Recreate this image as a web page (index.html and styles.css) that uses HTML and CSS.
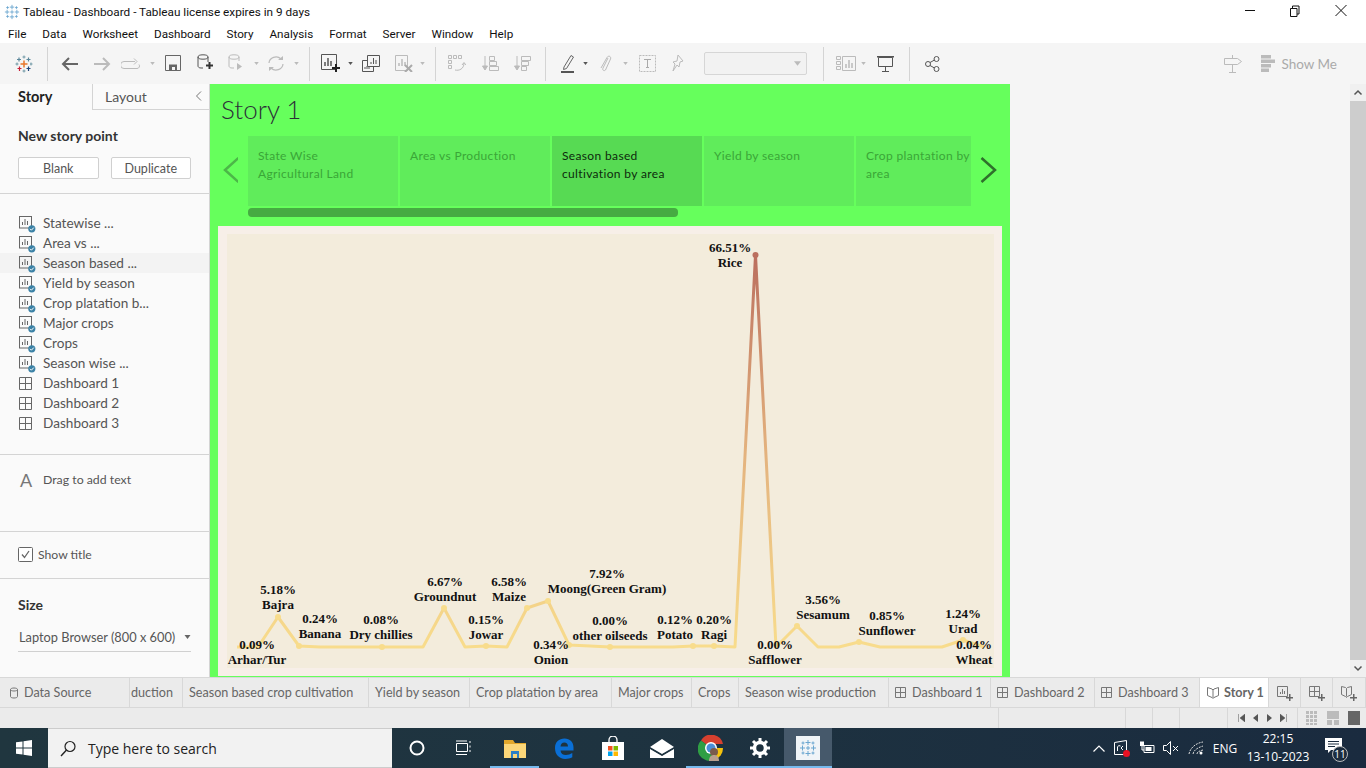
FILE: index.html
```html
<!DOCTYPE html>
<html lang="en">
<head>
<meta charset="utf-8">
<title>Tableau - Dashboard</title>
<link rel="stylesheet" href="styles.css">
</head>
<body>

<svg class="defs" width="0" height="0">
  <symbol id="sheet" viewBox="0 0 18 18">
    <rect x="0.5" y="0.5" width="12" height="11.5" fill="none" stroke="#666"/>
    <path d="M3.5 9V6M6 9V3M8.5 9V5" stroke="#666" fill="none"/>
    <circle cx="12.8" cy="12.8" r="3.6" fill="#3b82a6"/>
    <path d="M11 12.8l1.4 1.4 2.4-2.6" stroke="#fff" fill="none"/>
  </symbol>
  <symbol id="dash" viewBox="0 0 14 14">
    <path d="M.5 .5h12v12H.5zM.5 6.5h12M6.5 .5v12" stroke="#666" fill="none"/>
  </symbol>
  <symbol id="dashGrey" viewBox="0 0 12 12">
    <path d="M.5 .5h10v10H.5zM.5 5.5h10M5.5 .5v10" stroke="#777" fill="none"/>
  </symbol>
  <symbol id="book" viewBox="0 0 12 14">
    <path d="M.5 1.500l4.500 1.500 1 1 1-1 4.500-1.500v8l-4.500 2-1 1-1-1-4.500-2zM6 4v8" stroke="#777" fill="none"/>
  </symbol>
  <symbol id="wheel" viewBox="0 0 18 18">
    <path d="M9 1v5M6.500 3.500h5M9 12v5M6.500 14.500h5M1 9h5M3.500 6.500v5M12 9h5M14.500 6.500v5M7 9h4M9 7v4M4 2.500v3M2.500 4h3M14 2.500v3M12.500 4h3M4 12.500v3M2.500 14h3M14 12.500v3M12.500 14h3" stroke="#6aa6d0" fill="none"/>
  </symbol>
  <symbol id="caret" viewBox="0 0 6 4">
    <path d="M0 0h6L3 4z"/>
  </symbol>
</svg>

<header class="title-bar">
  <svg class="title-icon" width="16" height="16"><use href="#wheel"/></svg>
  <span class="title-text">Tableau - Dashboard - Tableau license expires in 9 days</span>
  <div class="win-buttons">
    <svg width="46" height="24"><path d="M17 10.500h10" stroke="#111"/></svg>
    <svg width="46" height="24"><path d="M16.500 8.500h6.500v8h-6.500zM18.500 8.500v-2.500h6.500v8h-2" stroke="#111" fill="none"/></svg>
    <svg width="46" height="24"><path d="M15.500 5l11 11M26.500 5l-11 11" stroke="#111" fill="none"/></svg>
  </div>
</header>

<nav class="menu-bar">
  <span>File</span><span>Data</span><span>Worksheet</span><span>Dashboard</span><span>Story</span>
  <span>Analysis</span><span>Format</span><span>Server</span><span>Window</span><span>Help</span>
</nav>

<div class="toolbar">
  <svg width="18" height="18" viewBox="0 0 18 18">
    <path d="M9 5.500v7M5.500 9h7" stroke="#e8762b" stroke-width="1.500"/>
    <path d="M9 .5v3M7.500 2h3M9 14.500v3M7.500 16h3M2 7.500v3M.5 9h3M15 9h2.500M16 7.500v3" stroke="#7099a6"/>
    <path d="M13.500 2.500v4M11.500 4.500h4M4 2.500v4M2 4.500h4" stroke="#5b879b" stroke-width="1.200"/>
    <path d="M4.500 11.500v4.500M2.500 13.500h4" stroke="#c72037" stroke-width="1.200"/>
    <path d="M13.500 11.500v4.500M11.500 13.500h4" stroke="#1f447a" stroke-width="1.200"/>
  </svg>
  <i class="sep"></i>
  <svg width="18" height="16"><path d="M8 2L2 8l6 6M2 8h15" fill="none" stroke="#666" stroke-width="2"/></svg>
  <svg width="18" height="16"><path d="M10 2l6 6-6 6M1 8h15" fill="none" stroke="#bbb" stroke-width="2"/></svg>
  <svg width="20" height="12"><path d="M14 3.500H3a2.500 2.500 0 0 0 0 7h13a2.500 2.500 0 0 0 2-4M13 .5l3 3-3 3" fill="none" stroke="#bbb"/></svg>
  <svg class="caret" width="5" height="3"><use href="#caret"/></svg>
  <svg width="17" height="17"><path d="M.5 .5h15v15H.5z" fill="none" stroke="#666"/><path d="M4 9.500h8V16H4z" fill="#666"/><path d="M7 12h3v3H7z" fill="#f5f5f5"/></svg>
  <svg width="16" height="19"><path d="M1 3v9c0 1 1 2 3 2h2M11 3v5" fill="none" stroke="#555"/><ellipse cx="6" cy="3" rx="5" ry="2.200" fill="none" stroke="#555"/><path d="M9 10.500h2.500V8h2v2.500H16v2h-2.500V15h-2v-2.500H9z" fill="#333"/></svg>
  <svg width="16" height="19"><path d="M1 3v9c0 1 1 2 3 2h2M11 3v4" fill="none" stroke="#bbb"/><ellipse cx="6" cy="3" rx="5" ry="2.200" fill="none" stroke="#bbb"/><path d="M9 9l5 3.500-5 3.500z" fill="#bbb"/></svg>
  <svg class="caret" width="5" height="3"><use href="#caret"/></svg>
  <svg width="18" height="17"><path d="M2 8a7 6.500 0 0 1 12-4M16 9a7 6.500 0 0 1-12 4" fill="none" stroke="#bbb" stroke-width="1.200"/><path d="M11 5h5V1zM7 12H2v4z" fill="#bbb"/></svg>
  <svg class="caret" width="5" height="3"><use href="#caret"/></svg>
  <i></i>
  <i class="sep"></i>
  <i></i>
  <svg width="19" height="19"><path d="M.5 .5h15v15H.5z" fill="none" stroke="#555"/><path d="M4 12V8M7 12V4M10 12V7" stroke="#555" stroke-width="1.500"/><path d="M11 13h3v-3h2v3h3v2h-3v3h-2v-3h-3z" fill="#222"/></svg>
  <svg class="caret dark" width="5" height="3"><use href="#caret"/></svg>
  <svg width="18" height="17"><path d="M.5 5.500h11v11H.5z" fill="#f5f5f5" stroke="#555"/><path d="M3 14v-2M5 14v-3M7 14v-2" stroke="#555"/><path d="M5.500 .5h12v11h-12z" fill="#f5f5f5" stroke="#555"/><path d="M9 9V7M11.500 9V3M14 9V5" stroke="#555"/></svg>
  <svg width="19" height="17"><path d="M.5 .5h12v15H.5z" fill="none" stroke="#bbb"/><path d="M4 11V8M7 11V4M10 11V7" stroke="#bbb" stroke-width="1.500"/><path d="M10 10l7 7M17 10l-7 7" stroke="#aaa" stroke-width="2"/></svg>
  <svg class="caret" width="5" height="3"><use href="#caret"/></svg>
  <i></i>
  <i class="sep"></i>
  <i></i>
  <svg width="18" height="17"><path d="M.5 .5h3v3h-3zM5.500 .5h3v3h-3zM10.500 .5h3v3h-3zM.5 5.500h3v3h-3zM.5 10.500h3v3h-3z" fill="none" stroke="#bbb"/><path d="M7 15c4 1 9-1 9-7M14 10l2-2.500 2 2.500" fill="none" stroke="#bbb"/></svg>
  <svg width="18" height="17"><path d="M4 1v12M1.500 11L4 15l2.500-4z" fill="#bbb" stroke="#bbb"/><path d="M8.500 1.500h5v4h-5zM8.500 6.500h7v4h-7zM8.500 11.500h9v4h-9z" fill="none" stroke="#bbb"/></svg>
  <svg width="18" height="17"><path d="M4 1v12M1.500 11L4 15l2.500-4z" fill="#bbb" stroke="#bbb"/><path d="M8.500 1.500h9v4h-9zM8.500 6.500h7v4h-7zM8.500 11.500h5v4h-5z" fill="none" stroke="#bbb"/></svg>
  <i></i>
  <i class="sep"></i>
  <i></i>
  <svg width="14" height="19"><path d="M3 13L10 1.500l2.500 1.500-7 11.500-3 1z" fill="none" stroke="#666"/><path d="M0 17h13v2H0z" fill="#555"/></svg>
  <svg class="caret dark" width="5" height="3"><use href="#caret"/></svg>
  <svg width="13" height="19"><path d="M9 4L4 14c-1 2 1 3.500 2.500 2L11.500 5c1-2.500-2-4-3.500-1.500L2 14" fill="none" stroke="#bbb"/></svg>
  <svg class="caret" width="5" height="3"><use href="#caret"/></svg>
  <svg width="17" height="17"><path d="M.5 .5h16v16H.5z" fill="none" stroke="#bbb" stroke-dasharray="2 1"/><path d="M5 4.500h7M8.500 4.500v8M7 12.500h3" fill="none" stroke="#aaa"/></svg>
  <svg width="13" height="19"><path d="M7 1l5 6-3 1-1 5-2-2-4 6 2-7-2-2 4-1z" fill="none" stroke="#bbb"/></svg>
  <i></i>
  <div class="tb-select"><svg class="caret" width="7" height="5"><use href="#caret"/></svg></div>
  <i></i>
  <i class="sep"></i>
  <i></i>
  <svg width="20" height="15"><path d="M.5 .5h4v3h-4zM.5 5.500h4v3h-4zM.5 10.500h4v3h-4zM6.500 .5h13v14h-13z" fill="none" stroke="#bbb"/><path d="M10 12V8M13 12V4M16 12V7" stroke="#bbb" stroke-width="1.500"/></svg>
  <svg class="caret" width="5" height="3"><use href="#caret"/></svg>
  <svg width="17" height="16"><path d="M0 .5h17" stroke="#555" stroke-width="2"/><path d="M1.500 1.500h14v9h-14zM8.500 10.500v5M5 15.500h7" fill="none" stroke="#555"/></svg>
  <i></i>
  <i class="sep"></i>
  <svg width="15" height="16"><circle cx="3" cy="8" r="2.500" fill="none" stroke="#555"/><circle cx="11.500" cy="3" r="2.500" fill="none" stroke="#555"/><circle cx="11.500" cy="13" r="2.500" fill="none" stroke="#555"/><path d="M5 6.500l4.500-2.500M5 9.500l4.500 2.500" stroke="#555"/></svg>
  <div class="tb-right">
    <svg width="18" height="18"><path d="M8.500 0v3M8.500 10v8M5 17.500h7M.5 3.500h13l4 3-4 3H.5z" fill="none" stroke="#bbb"/></svg>
    <svg class="show-icon" width="14" height="17"><path d="M0 0h10v3.500H0zM0 4.500h14V8H0zM0 9h10v3.500H0zM0 13.500h8V17H0z" fill="#bbb"/></svg>
    <span class="show-me">Show Me</span>
  </div>
</div>

<main class="workspace">
  <aside class="side">
    <div class="side-tabs">
      <div class="side-tab active">Story</div>
      <div class="side-tab">Layout
        <svg class="collapse" width="7" height="10"><path d="M6 .5L1.500 5 6 9.500" fill="none" stroke="#777"/></svg>
      </div>
    </div>
    <section class="new-point">
      <h3>New story point</h3>
      <div class="btn-row">
        <button class="btn">Blank</button>
        <button class="btn">Duplicate</button>
      </div>
    </section>
    <ul class="sheet-list">
      <li><svg width="18" height="18"><use href="#sheet"/></svg>Statewise ...</li>
      <li><svg width="18" height="18"><use href="#sheet"/></svg>Area vs ...</li>
      <li class="current"><svg width="18" height="18"><use href="#sheet"/></svg>Season based ...</li>
      <li><svg width="18" height="18"><use href="#sheet"/></svg>Yield by season</li>
      <li><svg width="18" height="18"><use href="#sheet"/></svg>Crop platation b...</li>
      <li><svg width="18" height="18"><use href="#sheet"/></svg>Major crops</li>
      <li><svg width="18" height="18"><use href="#sheet"/></svg>Crops</li>
      <li><svg width="18" height="18"><use href="#sheet"/></svg>Season wise ...</li>
      <li class="board"><svg width="18" height="14"><use href="#dash" width="14" height="14"/></svg>Dashboard 1</li>
      <li class="board"><svg width="18" height="14"><use href="#dash" width="14" height="14"/></svg>Dashboard 2</li>
      <li class="board"><svg width="18" height="14"><use href="#dash" width="14" height="14"/></svg>Dashboard 3</li>
    </ul>
    <div class="drag-text"><span class="big-a">A</span>Drag to add text</div>
    <label class="show-title">
      <svg width="15" height="15"><rect x=".5" y=".5" width="14" height="14" rx="1" fill="#fff" stroke="#666"/><path d="M4 7.500l2.500 3 4.500-6.500" fill="none" stroke="#666" stroke-width="1.300"/></svg>
      Show title
    </label>
    <section class="size-box">
      <h3>Size</h3>
      <div class="size-select">Laptop Browser (800 x 600)<svg class="dark-caret" width="7" height="4"><use href="#caret"/></svg></div>
    </section>
  </aside>

  <section class="story">
    <h1 class="story-title">Story 1</h1>
    <div class="story-nav">
      <svg class="arrow" width="17" height="26"><path d="M15.500 1L2 13l13.500 12" fill="none" stroke="#4cb748" stroke-width="2.500"/></svg>
      <div class="points">
        <div class="cards">
          <div class="card">State Wise<br>Agricultural Land</div>
          <div class="card">Area vs Production</div>
          <div class="card on">Season based<br>cultivation by area</div>
          <div class="card">Yield by season</div>
          <div class="card">Crop plantation by<br>area</div>
        </div>
        <div class="points-scroll"><div class="points-thumb"></div></div>
      </div>
      <svg class="arrow" width="17" height="26"><path d="M1.500 1L15 13 1.500 25" fill="none" stroke="#2f702c" stroke-width="2.500"/></svg>
    </div>
    <div class="sheet-frame">
      <svg class="chart" viewBox="227 234 767 434" width="767" height="434">
        <defs>
          <linearGradient id="lineFade" gradientUnits="userSpaceOnUse" x1="0" y1="255" x2="0" y2="647">
            <stop offset="0" stop-color="#bb6f5e"/>
            <stop offset="0.5" stop-color="#e3b27e"/>
            <stop offset="1" stop-color="#f8dc8c"/>
          </linearGradient>
        </defs>
        <path class="crop-line" d="M237 647L258 647 278 617 299 646 320 647 341 647 361 647 382 647 403 647 423 647 444 608 465 647 486 646 507 647 527 608 548 601 569 645 590 646 610 647 631 647 652 647 673 647 693 646 714 646 735 647 755.500 255 776 647 797 626 818 647 839 647 859 642 880 647 901 647 921 647 942 647 963 640 984 647"/>
        <g class="crop-dots">
          <circle cx="278" cy="617" r="3"/><circle cx="299" cy="646" r="3"/><circle cx="382" cy="647" r="3"/>
          <circle cx="444" cy="608" r="3"/><circle cx="486" cy="646" r="3"/><circle cx="527" cy="608" r="3"/>
          <circle cx="548" cy="601" r="3"/><circle cx="569" cy="645" r="3"/><circle cx="610" cy="647" r="3"/>
          <circle cx="693" cy="646" r="3"/><circle cx="714" cy="646" r="3"/><circle cx="797" cy="626" r="3"/>
          <circle cx="859" cy="642" r="3"/><circle cx="963" cy="640" r="3"/>
          <circle cx="755.500" cy="255" r="3" fill="#bb6f5e"/>
        </g>
        <g class="crop-labels">
          <text x="730" y="252">66.51%</text><text x="730" y="267">Rice</text>
          <text x="257" y="649">0.09%</text><text x="257" y="664">Arhar/Tur</text>
          <text x="278" y="594">5.18%</text><text x="278" y="609">Bajra</text>
          <text x="320" y="623">0.24%</text><text x="320" y="638">Banana</text>
          <text x="381" y="624">0.08%</text><text x="381" y="639">Dry chillies</text>
          <text x="445" y="586">6.67%</text><text x="445" y="601">Groundnut</text>
          <text x="486" y="624">0.15%</text><text x="486" y="639">Jowar</text>
          <text x="509" y="586">6.58%</text><text x="509" y="601">Maize</text>
          <text x="607" y="578">7.92%</text><text x="607" y="593">Moong(Green Gram)</text>
          <text x="551" y="649">0.34%</text><text x="551" y="664">Onion</text>
          <text x="610" y="625">0.00%</text><text x="610" y="640">other oilseeds</text>
          <text x="675" y="624">0.12%</text><text x="675" y="639">Potato</text>
          <text x="714" y="624">0.20%</text><text x="714" y="639">Ragi</text>
          <text x="775" y="649">0.00%</text><text x="775" y="664">Safflower</text>
          <text x="823" y="604">3.56%</text><text x="823" y="619">Sesamum</text>
          <text x="887" y="620">0.85%</text><text x="887" y="635">Sunflower</text>
          <text x="963" y="618">1.24%</text><text x="963" y="633">Urad</text>
          <text x="974" y="649">0.04%</text><text x="974" y="664">Wheat</text>
        </g>
      </svg>
    </div>
  </section>

  <div class="blank-area"></div>

  <div class="v-scroll">
    <svg width="16" height="17"><path d="M4.500 10.500L8 7l3.500 3.500" fill="none" stroke="#555" stroke-width="1.500"/></svg>
    <div class="v-thumb"></div>
    <svg width="16" height="17"><path d="M4.500 6.500L8 10l3.500-3.500" fill="none" stroke="#555" stroke-width="1.500"/></svg>
  </div>
</main>

<div class="tabs">
  <div class="tab source"><svg width="8" height="12"><path d="M.5 2.500v7c0 2 7 2 7 0v-7c0-2-7-2-7 0zM.5 2.500c0 2 7 2 7 0" fill="none" stroke="#777"/></svg>Data Source</div>
  <div class="tab clipped">duction</div>
  <div class="tab">Season based crop cultivation</div>
  <div class="tab">Yield by season</div>
  <div class="tab">Crop platation by area</div>
  <div class="tab">Major crops</div>
  <div class="tab">Crops</div>
  <div class="tab">Season wise production</div>
  <div class="tab"><svg width="12" height="12"><use href="#dashGrey"/></svg>Dashboard 1</div>
  <div class="tab"><svg width="12" height="12"><use href="#dashGrey"/></svg>Dashboard 2</div>
  <div class="tab"><svg width="12" height="12"><use href="#dashGrey"/></svg>Dashboard 3</div>
  <div class="tab open"><svg width="12" height="14"><use href="#book"/></svg>Story 1</div>
  <div class="tab add"><svg width="16" height="16"><path d="M.5 1.500h10v10H.5z" fill="none" stroke="#777"/><path d="M3.500 9V7M5.500 9V4M7.500 9V6" stroke="#777"/><path d="M9 12h3V9h1.500v3H16v1.500h-2.500V16H12v-2.500H9z" fill="#666"/></svg></div>
  <div class="tab add"><svg width="16" height="16"><path d="M.5 1.500h10v10H.5zM.5 6.500h10M5.500 1.500v10" fill="none" stroke="#777"/><path d="M9 12h3V9h1.500v3H16v1.500h-2.500V16H12v-2.500H9z" fill="#666"/></svg></div>
  <div class="tab add"><svg width="16" height="16"><path d="M.5 1.500l4 1 1 1 1-1 4-1v8l-4 2-1 1-1-1-4-2zM5.500 3.500v8" fill="none" stroke="#777"/><path d="M9 12h3V9h1.500v3H16v1.500h-2.500V16H12v-2.500H9z" fill="#666"/></svg></div>
</div>

<div class="status">
  <div></div><div></div><div></div><div></div><div></div>
  <div class="pager">
    <svg width="7" height="8"><path d="M.5 0v8M7 0v8L2 4z" fill="#555" stroke="#555" stroke-width=".5"/></svg>
    <svg width="5" height="8"><path d="M5 0v8L0 4z" fill="#555"/></svg>
    <svg width="5" height="8"><path d="M0 0v8l5-4z" fill="#555"/></svg>
    <svg width="7" height="8"><path d="M6.500 0v8M0 0v8l5-4z" fill="#555" stroke="#555" stroke-width=".5"/></svg>
  </div>
  <div class="views">
    <svg width="12" height="14"><path d="M0 0h3v3H0zM4 0h3v3H4zM8 0h3v3H8zM0 4h3v3H0zM4 4h3v3H4zM8 4h3v3H8zM0 8h3v3H0zM4 8h3v3H4zM8 8h3v3H8zM0 12h3v2H0zM4 12h3v2H4zM8 12h3v2H8z" fill="#bbb"/></svg>
    <svg width="12" height="14"><path d="M0 0h12v8H0zM0 9h5v5H0zM7 9h5v5H7z" fill="#bbb"/></svg>
    <svg width="12" height="14"><path d="M0 0h12v14H0z" fill="#666"/></svg>
  </div>
</div>

<footer class="taskbar">
  <div class="start">
    <svg width="16" height="16"><path d="M0 2.300l6.500-.9v6.200H0zM7.500 1.300L16 0v7.600H7.500zM0 8.500h6.500v6.100L0 13.700zM7.500 8.500H16V16l-8.500-1.200z" fill="#fff"/></svg>
  </div>
  <div class="search">
    <svg width="16" height="17"><circle cx="10" cy="6.500" r="5" fill="none" stroke="#222" stroke-width="1.200"/><path d="M6.500 10L1 16" stroke="#222" stroke-width="1.400"/></svg>
    <span>Type here to search</span>
  </div>
  <div class="task-cell">
    <svg width="16" height="16"><circle cx="8" cy="8" r="6.500" fill="none" stroke="#fff" stroke-width="2"/></svg>
  </div>
  <div class="task-cell">
    <svg class="task-view" width="16" height="16"><path d="M.5 3.500h11v8H.5zM0 1h11M0 14.500h11M14 1v2M14 5.500v2M14 10v2" fill="none" stroke="#fff"/></svg>
  </div>
  <div class="task-cell running">
    <svg width="22" height="19"><path d="M0 1h9l2 3h11v15H0z" fill="#e3a82c"/><path d="M0 5h22v14H0z" fill="#fcd779"/><path d="M7 12h8v7H7z" fill="#2b7fc6"/><path d="M9 15h4v4H9z" fill="#fcd779"/></svg>
  </div>
  <div class="task-cell">
    <svg width="20" height="21" viewBox="0 0 20 21"><path d="M1 10C1 4 5 .5 10.500 .5 16 .5 19.500 4 19.500 9.500v3H6.500c.2 3 2.500 4.500 5.300 4.500 2.500 0 4.500-.7 6.500-2v4.300c-2 1.200-4.500 1.700-7 1.700C4.800 20.500 1 16.500 1 10zM6.500 8.500h7.500C14 6 12.500 4.500 10.300 4.500 8.200 4.500 6.800 6 6.500 8.500z" fill="#0a6fd6"/></svg>
  </div>
  <div class="task-cell">
    <svg width="22" height="24"><path d="M7 7V4a4 4 0 0 1 8 0v3" fill="none" stroke="#fff" stroke-width="1.300"/><path d="M0 6h22v18H0z" fill="#fff"/><path d="M6 10h4.500v4.500H6z" fill="#f25022"/><path d="M11.500 10H16v4.500h-4.500z" fill="#7fba00"/><path d="M6 15.500h4.500V20H6z" fill="#00a4ef"/><path d="M11.500 15.500H16V20h-4.500z" fill="#ffb900"/></svg>
  </div>
  <div class="task-cell">
    <svg width="24" height="19"><path d="M0 8L12 0l12 8-12 7z" fill="#fff"/><path d="M0 10l12 7 12-7v9H0z" fill="#fff"/><path d="M0 9l12 7 12-7" fill="none" stroke="#1e3340"/></svg>
  </div>
  <div class="task-cell running">
    <svg width="26" height="26" viewBox="0 0 26 26">
      <path d="M13 13L3 5.500A12 12 0 0 1 25 9H13z" fill="#d6402f"/>
      <path d="M13 13h12a12 12 0 0 1-9 12z" fill="#f4c20d"/>
      <path d="M13 13L16 25A12 12 0 0 1 3 5.500z" fill="#2f9e44"/>
      <circle cx="13" cy="13" r="6" fill="#fff"/><circle cx="13" cy="13" r="4.500" fill="#4a8ed8"/>
      <circle cx="16" cy="17" r="4" fill="#7a5b4c"/><path d="M11 26c0-4 2-6 5-6s5 2 5 6z" fill="#b9a08e"/>
    </svg>
  </div>
  <div class="task-cell running">
    <svg width="20" height="20" viewBox="0 0 20 20"><circle cx="10" cy="10" r="5.500" fill="none" stroke="#fff" stroke-width="3.500"/><path d="M10 0v4M10 16v4M0 10h4M16 10h4M3 3l3 3M14 14l3 3M17 3l-3 3M6 14l-3 3" stroke="#fff" stroke-width="3"/></svg>
  </div>
  <div class="task-cell tableau">
    <span class="tb-tile"><svg width="18" height="18"><use href="#wheel"/></svg></span>
  </div>
  <div class="tray">
    <svg width="12" height="7"><path d="M.5 6.500L6 1l5.500 5.500" fill="none" stroke="#fff" stroke-width="1.200"/></svg>
    <svg width="17" height="17"><path d="M.5 2.500l12-2v14h-12zM3.500 11v-4a2 2 0 0 1 3-1M9 6l-2 2 2 2" fill="none" stroke="#fff"/><circle cx="12.500" cy="13.500" r="3.500" fill="#e81123"/></svg>
    <svg width="16" height="14"><path d="M5 4.500h10v7H5z" fill="none" stroke="#fff"/><path d="M6.500 6h6v4h-6zM1 1h4v4H1z" fill="#fff"/><path d="M2 0v1M4 0v1M3 5v4h2" stroke="#fff" fill="none"/></svg>
    <svg width="16" height="14"><path d="M.5 4.500h3l4-4v13l-4-4h-3zM10 5l5 5M15 5l-5 5" fill="none" stroke="#fff"/></svg>
    <svg width="16" height="14"><path d="M1 13C2 7 8 2 15 1M5 13c1-4 4-6 10-8M9 13c0-2 2-3 6-4" fill="none" stroke="#ddd" stroke-dasharray="2 1"/><circle cx="13" cy="12" r="1.500" fill="#fff"/></svg>
    <span class="lang">ENG</span>
    <div class="clock"><span>22:15</span><span>13-10-2023</span></div>
    <div class="notes">
      <svg width="17" height="16"><path d="M0 0h17v12H6l-3 3v-3H0z" fill="#fff"/><path d="M3 3.500h11M3 6h11M3 8.500h7" stroke="#1c2c3e"/></svg>
      <span class="badge">11</span>
    </div>
  </div>
</footer>

</body>
</html>
```

FILE: styles.css
```css
* {
  box-sizing: border-box;
}
html, body {
  height: 768px;
  margin: 0;
  overflow: hidden;
}
body {
  background: #fff;
  color: #333;
  font-family: "Lato", "Open Sans", sans-serif;
  font-size: 13px;
  width: 1366px;
}
ul, h1, h3 {
  margin: 0;
  padding: 0;
}
.defs {
  display: block;
  height: 0;
}

/* window title and menu */
.title-bar {
  align-items: center;
  display: flex;
  font-family: "Roboto", sans-serif;
  font-size: 11.75px;
  height: 24px;
  padding-left: 4px;
}
.title-icon {
  margin-right: 3px;
}
.title-text {
  color: #111;
  flex: 1;
}
.win-buttons {
  display: flex;
}
.win-buttons svg {
  display: block;
}
.menu-bar {
  align-items: center;
  color: #111;
  display: flex;
  font-family: "Roboto", sans-serif;
  font-size: 11.7px;
  gap: 16px;
  height: 19px;
  padding-left: 8px;
}

/* toolbar */
.toolbar {
  align-items: center;
  background: #f5f5f5;
  display: grid;
  grid-template-columns: 47px 1px 44px 20px 37px 6px 36px 28px 34px 6px 34px 6px 10px 1px 3px 34px 6px 36px 30px 6px 10px 1px 3px 36px 30px 34px 6px 1px 7px 29px 6px 34px 6px 38px 22px 16px 103px 16px 1px 8px 28px 6px 39px 4px 1px 44px 1fr;
  height: 41px;
  justify-items: center;
}
.sep {
  background: #d4d4d4;
  height: 34px;
  width: 1px;
}
.caret {
  fill: #bbb;
}
.caret.dark {
  fill: #555;
}
.tb-select {
  align-items: center;
  background: #f2f2f2;
  border: 1px solid #d6d6d6;
  border-radius: 2px;
  display: flex;
  height: 23px;
  justify-content: flex-end;
  padding-right: 5px;
  width: 103px;
}
.tb-right {
  align-items: center;
  display: flex;
  justify-self: end;
  padding-right: 29px;
}
.show-icon {
  margin-left: 19px;
}
.show-me {
  color: #aaa;
  font-size: 13.5px;
  margin-left: 6px;
  white-space: nowrap;
}

/* main area */
.workspace {
  display: flex;
  height: 593px;
}
.side {
  background: #fafafa;
  border-right: 1px solid #d4d4d4;
  display: flex;
  flex-direction: column;
  width: 210px;
}
.side-tabs {
  display: flex;
  height: 26px;
}
.side-tab {
  align-items: center;
  border-bottom: 1px solid #d4d4d4;
  border-left: 1px solid #d4d4d4;
  color: #555;
  display: flex;
  flex: 1;
  font-size: 14px;
  justify-content: space-between;
  padding: 0 7px 1px 12px;
}
.side-tab.active {
  border: 0;
  color: #222;
  flex: 0 0 92px;
  font-size: 14.5px;
  font-weight: 700;
  padding-left: 18px;
}
.new-point {
  border-bottom: 1px solid #d4d4d4;
  height: 84px;
  padding: 17px 18px 0;
}
.new-point h3, .size-box h3 {
  color: #333;
  font-size: 14px;
  font-weight: 700;
}
.btn-row {
  display: flex;
  gap: 12px;
  margin-top: 13px;
}
.btn {
  background: #fff;
  border: 1px solid #d0d0d0;
  border-radius: 2px;
  color: #555;
  font-family: inherit;
  font-size: 12.5px;
  height: 22px;
  padding: 0;
  width: 81px;
}
.sheet-list {
  border-bottom: 1px solid #d4d4d4;
  height: 261px;
  list-style: none;
  padding-top: 19px;
}
.sheet-list li {
  align-items: center;
  color: #555;
  display: flex;
  font-size: 13.6px;
  gap: 6px;
  height: 20px;
  padding: 0 0 1px 19px;
}
.sheet-list li.current {
  background: #f3f3f3;
}
.sheet-list svg {
  margin-top: 5px;
}
.sheet-list .board svg {
  margin-top: 2px;
}
.drag-text {
  align-items: flex-start;
  border-bottom: 1px solid #d4d4d4;
  color: #555;
  display: flex;
  font-size: 12.3px;
  height: 77px;
  padding: 17px 0 0 20px;
}
.big-a {
  color: #777;
  font-size: 18px;
  line-height: 16px;
  width: 23px;
}
.show-title {
  align-items: center;
  border-bottom: 1px solid #d4d4d4;
  color: #555;
  display: flex;
  font-size: 12.2px;
  gap: 5px;
  height: 47px;
  padding: 0 0 1px 18px;
}
.size-box {
  flex: 1;
  padding: 17px 18px 0;
}
.size-select {
  align-items: center;
  border-bottom: 1px solid #d0d0d0;
  color: #555;
  display: flex;
  font-size: 12.8px;
  height: 26px;
  justify-content: space-between;
  margin-top: 13px;
  padding: 0 0 4px 1px;
  width: 173px;
}
.dark-caret {
  fill: #666;
}

/* story */
.story {
  background: #66ff5c;
  display: flex;
  flex-direction: column;
  padding-bottom: 1px;
  width: 800px;
}
.story-title {
  color: #2c2f38;
  font-size: 26px;
  font-weight: 300;
  height: 52px;
  line-height: 50px;
  padding-left: 11px;
}
.story-nav {
  align-items: flex-start;
  display: flex;
  height: 90px;
}
.arrow {
  flex: none;
  margin: 21px 10px 0 13px;
  width: 15px;
}
.arrow:last-child {
  margin: 21px 0 0 9px;
  width: 17px;
}
.points {
  width: 723px;
}
.cards {
  display: flex;
  gap: 2px;
  height: 70px;
  overflow: hidden;
}
.card {
  background: #60ec5b;
  color: #3aa637;
  flex: 0 0 150px;
  font-size: 12px;
  letter-spacing: .35px;
  line-height: 18px;
  padding: 11px 10px;
  white-space: nowrap;
}
.card.on {
  background: #57da53;
  color: #0d2a0c;
}
.points-scroll {
  height: 9px;
  margin-top: 2px;
}
.points-thumb {
  background: #46ab42;
  border-radius: 4px;
  height: 9px;
  width: 430px;
}
.sheet-frame {
  background: #f7efe8;
  flex: 1;
  margin: 0 8px;
  padding: 8px 9px;
}
.chart {
  background: #f3ecdc;
  display: block;
  overflow: visible;
}
.crop-line {
  fill: none;
  stroke: url(#lineFade);
  stroke-linejoin: round;
  stroke-width: 3;
}
.crop-dots {
  fill: #f8dc8c;
}
.crop-labels text {
  fill: #111;
  font-family: "Liberation Serif", serif;
  font-size: 13px;
  font-weight: 700;
  text-anchor: middle;
}
.blank-area {
  background: #f5f5f5;
  flex: 1;
}
.v-scroll {
  background: #f0f0f0;
  display: flex;
  flex-direction: column;
  width: 16px;
}
.v-thumb {
  background: #cdcdcd;
  flex: 1;
}
.v-scroll svg {
  display: block;
  flex: none;
}

/* sheet tabs */
.tabs {
  background: #ebebeb;
  border-bottom: 1px solid #d8d8d8;
  border-top: 1px solid #d8d8d8;
  display: grid;
  grid-template-columns: 130px 53px 186px 101px 142px 80px 47px 150px 102px 104px 105px 69px 32px 32px 33px;
  height: 31px;
}
.tab {
  align-items: center;
  border-right: 1px solid #d8d8d8;
  color: #666;
  display: flex;
  font-size: 12.6px;
  gap: 5px;
  padding-left: 6px;
  white-space: nowrap;
}
.tab.source {
  gap: 6px;
  padding-left: 10px;
}
.tab.clipped {
  padding-left: 1px;
}
.tab.open {
  background: #fff;
  font-weight: 700;
  padding-left: 7px;
}
.tab.add {
  justify-content: center;
  padding: 0;
}
.status {
  background: #ebebeb;
  display: grid;
  grid-template-columns: 999px 127px 27px 27px 48px 70px 1fr;
  height: 20px;
}
.status > div {
  border-right: 1px solid #d8d8d8;
}
.pager, .views {
  align-items: center;
  display: flex;
  justify-content: space-around;
  padding: 0 6px;
}
.status > .views {
  border-right: 0;
  gap: 9px;
  justify-content: flex-start;
  padding-left: 8px;
}

/* windows taskbar */
.taskbar {
  align-items: center;
  background: linear-gradient(90deg, #20363f 0%, #1e3340 45%, #1a2b3f 100%);
  color: #fff;
  display: flex;
  height: 40px;
}
.start {
  align-items: center;
  display: flex;
  height: 40px;
  justify-content: center;
  width: 48px;
}
.search {
  align-items: center;
  background: #f2f2f2;
  border-bottom: 1px solid #ccc;
  border-top: 1px solid #ccc;
  color: #222;
  display: flex;
  font-family: "Open Sans", sans-serif;
  font-size: 14px;
  height: 40px;
  padding-left: 12px;
  width: 344px;
}
.search span {
  margin-left: 12px;
}
.task-cell {
  align-items: center;
  display: flex;
  height: 40px;
  justify-content: center;
  width: 49px;
}
.task-view {
  margin-right: 4px;
}
.task-cell.running, .task-cell.tableau {
  box-shadow: inset 0 -2px 0 #76b9ed;
}
.task-cell.tableau {
  background: #46596b;
  width: 48px;
}
.tb-tile {
  align-items: center;
  background: #f0f4f7;
  display: flex;
  height: 24px;
  justify-content: center;
  width: 24px;
}
.tray {
  align-items: center;
  display: grid;
  font-family: "Open Sans", sans-serif;
  font-size: 12px;
  grid-template-columns: 24px 23px 26px 21px 30px 28px 78px 32px;
  justify-items: center;
  margin-left: auto;
  padding-right: 17px;
}
.clock {
  display: flex;
  flex-direction: column;
  line-height: 18px;
  text-align: center;
}
.notes {
  height: 24px;
  position: relative;
  width: 28px;
}
.notes svg {
  left: 6px;
  position: absolute;
  top: 2px;
}
.badge {
  background: #1c2c3e;
  border: 1px solid #bbb;
  border-radius: 50%;
  font-size: 10px;
  height: 16px;
  left: 13px;
  line-height: 14px;
  position: absolute;
  text-align: center;
  top: 10px;
  width: 16px;
}
```
